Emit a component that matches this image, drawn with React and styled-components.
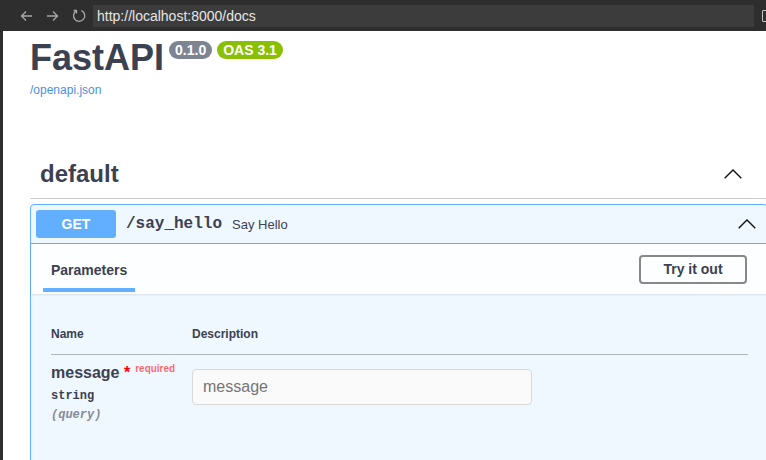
import React from 'react';
import styled, { createGlobalStyle } from 'styled-components';

const GlobalStyle = createGlobalStyle`
    html, body {
        margin : 0;
        padding : 0;
        background : #ffffff;
        overflow : hidden;
    }
    * {
        box-sizing : border-box;
    }
`

const App = () => {
    return (
        <StWindow>
            <GlobalStyle />
            <StBrowserBar>
                <StNavIcons>
                    <svg width="13" height="12" viewBox="0 0 13 12">
                        <path d="M12 6H1.5M6 1.5L1.5 6L6 10.5" fill="none" stroke="#a8a8a8" strokeWidth="1.3" />
                    </svg>
                    <svg width="13" height="12" viewBox="0 0 13 12">
                        <path d="M1 6h10.5M7 1.5L11.5 6L7 10.5" fill="none" stroke="#a8a8a8" strokeWidth="1.3" />
                    </svg>
                    <svg width="14" height="14" viewBox="0 0 14 14">
                        <path d="M4.3 1.9A5.6 5.6 0 1 0 9.4 1.6" fill="none" stroke="#a8a8a8" strokeWidth="1.3" />
                        <path d="M1.6 1.5h2.9v2.9" fill="none" stroke="#a8a8a8" strokeWidth="1.3" />
                    </svg>
                </StNavIcons>
                <StUrlField>http://localhost:8000/docs</StUrlField>
                <StExtensionBox />
            </StBrowserBar>

            <StViewport>
                <StGutter />
                <StPage>
                    <StWrapper>
                        <StInfo>
                            <StTitleRow>
                                <StTitle>FastAPI</StTitle>
                                <StBadge $bg="#7d8492">0.1.0</StBadge>
                                <StBadge $bg="#89bf04">OAS 3.1</StBadge>
                            </StTitleRow>
                            <StSpecLink>/openapi.json</StSpecLink>
                        </StInfo>

                        <StTagHeader>
                            <StTagName>default</StTagName>
                            <StChevron width="18" height="10" viewBox="0 0 18 10">
                                <path d="M0.7 9.3L9 1L17.3 9.3" fill="none" stroke="#111" strokeWidth="1.4" />
                            </StChevron>
                        </StTagHeader>

                        <StOpBlock>
                            <StSummary>
                                <StMethod>GET</StMethod>
                                <StPath>/say_hello</StPath>
                                <StSummaryText>Say Hello</StSummaryText>
                                <StChevron $right="6px" width="18" height="10" viewBox="0 0 18 10">
                                    <path d="M0.7 9.3L9 1L17.3 9.3" fill="none" stroke="#111" strokeWidth="1.4" />
                                </StChevron>
                            </StSummary>

                            <StSectionHeader>
                                <StTabItem>Parameters</StTabItem>
                                <StTryButton>Try it out</StTryButton>
                            </StSectionHeader>

                            <StParamsBody>
                                <StParamTable>
                                    <thead>
                                        <tr>
                                            <StHeadCell>Name</StHeadCell>
                                            <StHeadCell>Description</StHeadCell>
                                        </tr>
                                    </thead>
                                    <tbody>
                                        <tr>
                                            <StCell>
                                                <StParamName>
                                                    message<StStar>&nbsp;*</StStar><StRequired>required</StRequired>
                                                </StParamName>
                                                <StParamType>string</StParamType>
                                                <StParamIn>(query)</StParamIn>
                                            </StCell>
                                            <StCell>
                                                <StParamInput placeholder='message' />
                                            </StCell>
                                        </tr>
                                    </tbody>
                                </StParamTable>
                            </StParamsBody>
                        </StOpBlock>
                    </StWrapper>
                </StPage>
            </StViewport>
        </StWindow>
    );
};

export default App;

const StWindow = styled.div`
    display : flex;
    flex-direction : column;
    width : 766px;
    height : 460px;
    overflow : hidden;

    font-family : 'Liberation Sans', Arial, sans-serif;
    color : #3b4151;
`
const StBrowserBar = styled.div`
    display : flex;
    align-items : center;
    flex : none;
    height : 31px;
    overflow : hidden;

    background : #2e2e2e;
`
const StNavIcons = styled.div`
    display : flex;
    align-items : center;
    flex : none;
    gap : 13px;
    width : 93px;
    padding-left : 20px;
`
const StUrlField = styled.div`
    flex : none;
    width : 661px;
    height : 22px;
    padding-left : 4px;

    background : #3c3c3c;

    font-size : 14px;
    line-height : 22px;
    color : #e6e6e6;
`
const StExtensionBox = styled.div`
    flex : none;
    width : 14px;
    height : 12px;
    margin-left : 8px;

    border : 1.5px solid #c4c4c4;
    border-radius : 1px;
`
const StViewport = styled.div`
    display : flex;
    flex : 1;
    min-height : 0;
`
const StGutter = styled.div`
    flex : none;
    width : 3px;

    background : #2e2e2e;
`
const StPage = styled.div`
    flex : 1;
    min-width : 0;
    padding-left : 27px;
    overflow : hidden;

    background : #ffffff;
`
const StWrapper = styled.div`
    width : 738px;
`
const StInfo = styled.div`
    padding-top : 9px;
`
const StTitleRow = styled.div`
    display : flex;
    align-items : flex-start;
`
const StTitle = styled.h1`
    margin : 0;

    font-size : 36px;
    line-height : 36px;
    font-weight : bold;
    color : #3b4151;
`
const StBadge = styled.span`
    height : 18px;
    margin-top : 1px;
    margin-left : 5px;
    padding : 0 6px;

    border-radius : 57px;
    background : ${(props) => props.$bg};

    font-size : 14px;
    line-height : 18px;
    font-weight : bold;
    color : #ffffff;
`
const StSpecLink = styled.a`
    display : block;
    margin-top : 7px;

    font-size : 12px;
    line-height : 14px;
    color : #4990e2;
    text-decoration : none;
`
const StTagHeader = styled.div`
    display : flex;
    align-items : center;
    height : 48px;
    margin-top : 54px;
    padding : 0 26px 2px 10px;

    border-bottom : 1px solid #cccdd0;
`
const StTagName = styled.h3`
    margin : 0;

    font-size : 24px;
    font-weight : bold;
    color : #3b4151;
`
const StChevron = styled.svg`
    flex : none;
    margin-left : auto;
    margin-right : ${(props) => props.$right || '0'};
`
const StOpBlock = styled.div`
    margin-top : 5px;

    border : 1px solid #61affe;
    border-radius : 4px;
    background : #eff7ff;
`
const StSummary = styled.div`
    display : flex;
    align-items : center;
    padding : 5px;

    border-bottom : 1px solid #61affe;
`
const StMethod = styled.span`
    width : 80px;
    height : 28px;

    border-radius : 3px;
    background : #61affe;

    font-size : 14px;
    line-height : 28px;
    font-weight : bold;
    text-align : center;
    color : #ffffff;
`
const StPath = styled.span`
    padding : 0 10px;

    font-family : 'Liberation Mono', 'Courier New', monospace;
    font-size : 16px;
    font-weight : bold;
    color : #3b4151;
`
const StSummaryText = styled.span`
    font-size : 13px;
    color : #3b4151;
`
const StSectionHeader = styled.div`
    display : flex;
    align-items : center;
    height : 50px;
    padding : 0 20px 0 12px;

    background : rgba(255,255,255,.8);
    box-shadow : 0 1px 2px rgba(0,0,0,.1);
`
const StTabItem = styled.h4`
    display : flex;
    flex-direction : column;
    align-self : stretch;
    margin : 0;
    padding : 16px 8px 0;

    font-size : 14px;
    line-height : 20px;
    font-weight : bold;
    color : #3b4151;

    &::after {
        content : '';
        display : block;
        height : 4px;
        margin : 8px -8px 0;
        background : #61affe;
    }
`
const StTryButton = styled.button`
    width : 108px;
    height : 29px;
    margin-left : auto;
    padding : 0;

    border : 2px solid #888888;
    border-radius : 4px;
    background : transparent;

    font-family : 'Liberation Sans', Arial, sans-serif;
    font-size : 14px;
    font-weight : bold;
    color : #3b4151;
`
const StParamsBody = styled.div`
    height : 200px;
    padding : 21px 19px 0 20px;
`
const StParamTable = styled.table`
    width : 100%;
    border-collapse : collapse;
`
const StHeadCell = styled.th`
    padding : 12px 0;

    border-bottom : 1px solid #aeb6c2;

    font-size : 12px;
    line-height : 15px;
    font-weight : bold;
    text-align : left;
    color : #3b4151;

    &:first-child {
        width : 141px;
    }
`
const StCell = styled.td`
    padding : 9px 0 10px;
    vertical-align : top;
`
const StParamName = styled.div`
    font-size : 16px;
    line-height : 18px;
    font-weight : bold;
    color : #3b4151;
    white-space : nowrap;
`
const StStar = styled.span`
    color : #ff0000;
`
const StRequired = styled.span`
    position : relative;
    top : -6px;
    padding-left : 5px;

    font-size : 10px;
    font-weight : bold;
    color : rgba(255,0,0,.6);
`
const StParamType = styled.div`
    padding : 5px 0;

    font-family : 'Liberation Mono', 'Courier New', monospace;
    font-size : 12px;
    line-height : 14px;
    font-weight : bold;
    color : #3b4151;
`
const StParamIn = styled.div`
    font-family : 'Liberation Mono', 'Courier New', monospace;
    font-size : 12px;
    line-height : 14px;
    font-weight : bold;
    font-style : italic;
    color : #878c96;
`
const StParamInput = styled.input`
    display : block;
    width : 340px;
    height : 36px;
    margin-top : 5px;
    padding : 0 10px;

    border : 1px solid #d9d9d9;
    border-radius : 4px;
    background : #fafafa;
    outline : none;

    font-family : 'Liberation Sans', Arial, sans-serif;
    font-size : 16px;
    color : #3b4151;

    &::placeholder {
        color : #757575;
    }
`
